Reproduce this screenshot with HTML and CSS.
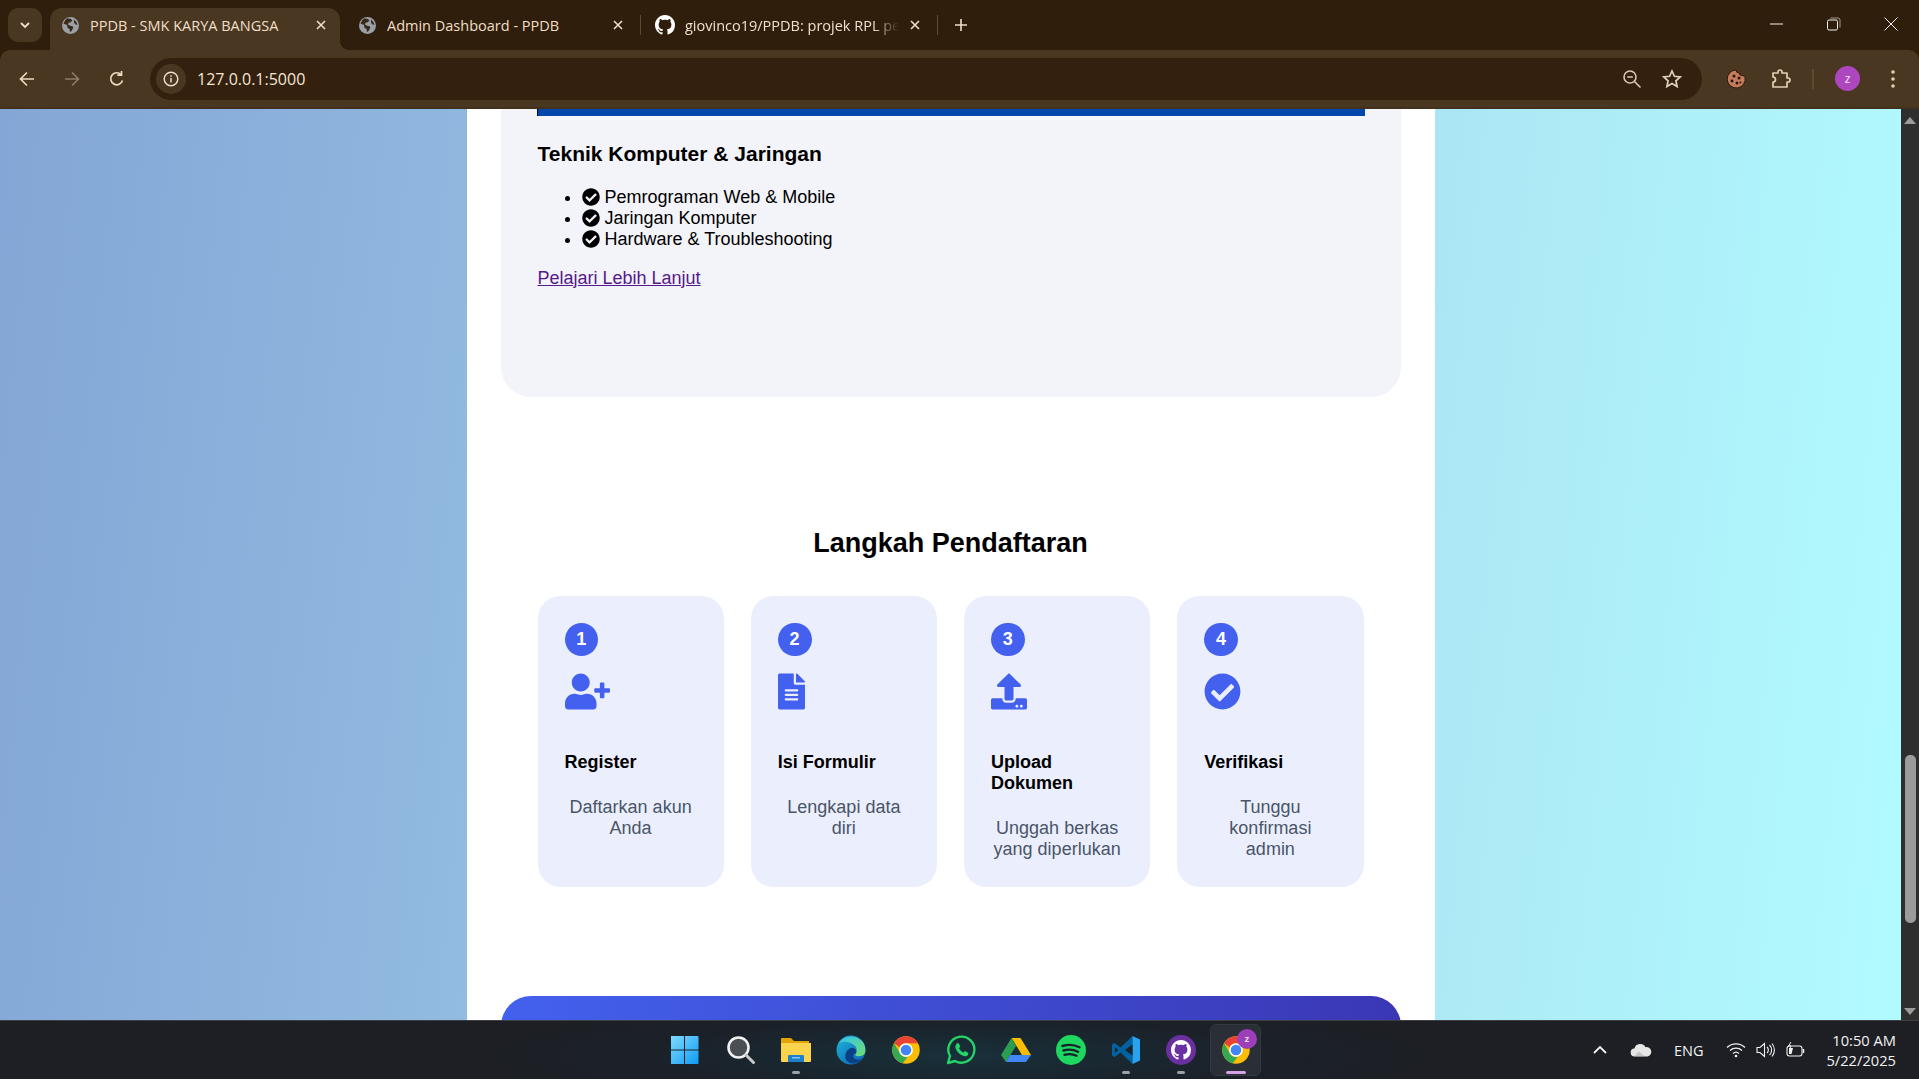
FILE: index.html
```html
<!DOCTYPE html>
<html lang="id">
<head>
<meta charset="utf-8">
<title>PPDB - SMK KARYA BANGSA</title>
<link rel="stylesheet" href="styles.css">
</head>
<body>
<svg class="defs" width="0" height="0" aria-hidden="true">
  <symbol id="i-check" viewBox="0 0 512 512"><path d="M504 256c0 136.967-111.033 248-248 248S8 392.967 8 256 119.033 8 256 8s248 111.033 248 248zM227.314 387.314l184-184c6.248-6.248 6.248-16.379 0-22.627l-22.627-22.627c-6.248-6.249-16.379-6.249-22.628 0L216 308.118l-69.059-69.059c-6.248-6.248-16.379-6.248-22.628 0l-22.627 22.627c-6.248 6.248-6.248 16.379 0 22.627l104 104c6.249 6.249 16.379 6.249 22.628.001z"/></symbol>
  <symbol id="i-github" viewBox="0 0 16 16"><path d="M8 0C3.58 0 0 3.58 0 8c0 3.54 2.29 6.53 5.47 7.59.4.07.55-.17.55-.38 0-.19-.01-.82-.01-1.49-2.01.37-2.53-.49-2.69-.94-.09-.23-.48-.94-.82-1.13-.28-.15-.68-.52-.01-.53.63-.01 1.08.58 1.23.82.72 1.21 1.87.87 2.33.66.07-.52.28-.87.51-1.07-1.78-.2-3.64-.89-3.64-3.95 0-.87.31-1.59.82-2.15-.08-.2-.36-1.02.08-2.12 0 0 .67-.21 2.2.82.64-.18 1.32-.27 2-.27.68 0 1.36.09 2 .27 1.53-1.04 2.2-.82 2.2-.82.44 1.1.16 1.92.08 2.12.51.56.82 1.27.82 2.15 0 3.07-1.87 3.75-3.65 3.95.29.25.54.73.54 1.48 0 1.07-.01 1.93-.01 2.2 0 .21.15.46.55.38A8.013 8.013 0 0016 8c0-4.42-3.58-8-8-8z"/></symbol>
  <symbol id="i-globe" viewBox="0 0 16 16"><circle cx="8" cy="8" r="8" fill="#9aa0a6"/><path fill="#3a2a18" d="M5 1.2l3.5.6 1.2 1.5-1.5 1.6-2 .4-.6 1.7 2 1.3 2.4.3.6 1.5-1.6 3-1.5.9-.4-2.6-2-1.4-.3-2.4L1.4 6.2 3 3zM11 2.4l2.4 2 1.2 3-1.8-.4-1.3-1.4z"/></symbol>
  <symbol id="i-close" viewBox="0 0 12 12"><path d="M2 2l8 8M10 2l-8 8" fill="none" stroke="currentColor" stroke-width="1.6"/></symbol>
  <symbol id="i-chrome" viewBox="0 0 48 48">
    <circle cx="24" cy="24" r="22" fill="#fbbc04"/>
    <path fill="#ea4335" d="M24 2a22 22 0 0 1 19 11H24a11 11 0 0 0-10 6.5L5 13A22 22 0 0 1 24 2z"/>
    <path fill="#34a853" d="M5 13l9.5 16.500A11 11 0 0 0 27 34.600L18.500 45.300A22 22 0 0 1 5 13z"/>
    <circle cx="24" cy="24" r="11" fill="#fff"/><circle cx="24" cy="24" r="8.500" fill="#4285f4"/>
  </symbol>
</svg>

<div class="tabstrip">
  <div class="tab-menu"><svg width="12" height="12" viewBox="0 0 12 12"><path d="M2 4l4 4 4-4" fill="none" stroke="#f0dfc8" stroke-width="1.800"/></svg></div>
  <div class="tab tab-active">
    <svg class="tab-icon"><use href="#i-globe"/></svg>
    <span class="tab-title">PPDB - SMK KARYA BANGSA</span>
    <svg class="tab-close"><use href="#i-close"/></svg>
  </div>
  <div class="tab-sep tab-sep-off"></div>
  <div class="tab">
    <svg class="tab-icon"><use href="#i-globe"/></svg>
    <span class="tab-title">Admin Dashboard - PPDB</span>
    <svg class="tab-close"><use href="#i-close"/></svg>
  </div>
  <div class="tab-sep"></div>
  <div class="tab">
    <svg class="tab-icon tab-icon-gh"><use href="#i-github"/></svg>
    <span class="tab-title tab-title-fade">giovinco19/PPDB: projek RPL pe</span>
    <svg class="tab-close"><use href="#i-close"/></svg>
  </div>
  <div class="tab-sep"></div>
  <svg class="tab-new" width="14" height="14" viewBox="0 0 14 14"><path d="M7 1v12M1 7h12" stroke="#f0dfc8" stroke-width="1.600"/></svg>
  <div class="win-controls">
    <svg width="14" height="14" viewBox="0 0 14 14"><path d="M0 7h13" stroke="#f2f2f2" stroke-width="1"/></svg>
    <svg width="14" height="14" viewBox="0 0 14 14"><rect x=".5" y="3" width="10" height="10" rx="1.500" fill="none" stroke="#f2f2f2"/><path d="M3.500 1h7.500a2 2 0 0 1 2 2v7.500" fill="none" stroke="#a89c8e"/></svg>
    <svg width="14" height="14" viewBox="0 0 14 14"><path d="M.5.500l13 13M13.500.500l-13 13" stroke="#f2f2f2" stroke-width="1"/></svg>
  </div>
</div>

<div class="toolbar">
  <div class="nav-btns">
    <svg width="18" height="18" viewBox="0 0 18 18"><path d="M16 9H3M9 2.500L2.500 9 9 15.500" fill="none" stroke="#ecd9bf" stroke-width="1.700"/></svg>
    <svg width="18" height="18" viewBox="0 0 18 18"><path d="M2 9h13M9 2.500L15.500 9 9 15.500" fill="none" stroke="#8d7b66" stroke-width="1.700"/></svg>
    <svg width="18" height="18" viewBox="0 0 18 18"><path d="M14.500 10.500a6 6 0 1 1-1.500-6M13.500 1v4.200H9.300" fill="none" stroke="#ecd9bf" stroke-width="1.700"/></svg>
  </div>
  <div class="omnibox">
    <span class="info-chip"><svg width="16" height="16" viewBox="0 0 16 16"><circle cx="8" cy="8" r="6.800" fill="none" stroke="#f0dfc8" stroke-width="1.400"/><path d="M8 7v4.500M8 4.200v1.500" stroke="#f0dfc8" stroke-width="1.500"/></svg></span>
    <span class="url">127.0.0.1:5000</span>
    <svg class="omni-zoom" width="20" height="20" viewBox="0 0 20 20"><circle cx="8" cy="8" r="6" fill="none" stroke="#d8c8b2" stroke-width="1.600"/><path d="M5.200 8h5.600M12.500 12.500l6 6" stroke="#d8c8b2" stroke-width="1.600"/></svg>
    <svg class="omni-star" width="20" height="20" viewBox="0 0 20 20"><path d="M10 2l2.400 5.300 5.800.6-4.300 3.900 1.200 5.700L10 14.600l-5.100 2.900 1.200-5.700L1.800 7.900l5.800-.6z" fill="none" stroke="#e0d2bd" stroke-width="1.700"/></svg>
  </div>
  <div class="tool-icons">
    <svg class="ti-cookie" width="20" height="20" viewBox="0 0 20 20"><path d="M10 1a3 3 0 0 0 3 3 3 3 0 0 0 3 2.500c1 .3 2.800.5 3 1.500A9 9 0 1 1 10 1z" fill="#c67c57" stroke="#2a1a10" stroke-width="1"/><circle cx="8" cy="7" r="1.500" fill="#23150d"/><circle cx="13" cy="9" r="1.500" fill="#23150d"/><circle cx="6" cy="12" r="1.400" fill="#23150d"/><circle cx="11" cy="14" r="1.500" fill="#23150d"/><circle cx="14.500" cy="13.500" r="1" fill="#23150d"/></svg>
    <svg class="ti-puzzle" width="22" height="22" viewBox="0 0 22 22"><path d="M3 5h5V4a2 2 0 0 1 4 0v1h5v5h1a2 2 0 0 1 0 4h-1v5H3v-5a2.500 2.500 0 0 0 0-5z" fill="none" stroke="#e3cfb2" stroke-width="1.700" stroke-linejoin="round"/></svg>
    <span class="ti-sep"></span>
    <span class="avatar">z</span>
    <svg class="ti-dots" width="6" height="20" viewBox="0 0 6 20"><circle cx="3" cy="3" r="1.800" fill="#e6cfae"/><circle cx="3" cy="10" r="1.800" fill="#e6cfae"/><circle cx="3" cy="17" r="1.800" fill="#e6cfae"/></svg>
  </div>
</div>

<div class="viewport">
  <div class="page">
    <main class="sheet">
      <section class="major-card">
        <div class="major-image"></div>
        <h3 class="major-title">Teknik Komputer &amp; Jaringan</h3>
        <ul class="major-list">
          <li><svg class="li-check"><use href="#i-check"/></svg> Pemrograman Web &amp; Mobile</li>
          <li><svg class="li-check"><use href="#i-check"/></svg> Jaringan Komputer</li>
          <li><svg class="li-check"><use href="#i-check"/></svg> Hardware &amp; Troubleshooting</li>
        </ul>
        <a class="major-link" href="#">Pelajari Lebih Lanjut</a>
      </section>

      <section class="steps">
        <h2 class="steps-title">Langkah Pendaftaran</h2>
        <div class="steps-grid">
          <article class="step">
            <div class="step-num">1</div>
            <svg class="step-icon step-icon-user" viewBox="0 0 640 512"><path d="M624 208h-64v-64c0-8.800-7.200-16-16-16h-32c-8.800 0-16 7.200-16 16v64h-64c-8.800 0-16 7.200-16 16v32c0 8.800 7.200 16 16 16h64v64c0 8.800 7.200 16 16 16h32c8.800 0 16-7.200 16-16v-64h64c8.800 0 16-7.200 16-16v-32c0-8.800-7.200-16-16-16zm-400 48c70.700 0 128-57.300 128-128S294.700 0 224 0 96 57.300 96 128s57.300 128 128 128zm89.600 32h-16.700c-22.200 10.200-46.900 16-72.900 16s-50.600-5.800-72.900-16h-16.700C60.200 288 0 348.200 0 422.400V464c0 26.500 21.500 48 48 48h352c26.500 0 48-21.500 48-48v-41.600c0-74.200-60.200-134.400-134.400-134.400z"/></svg>
            <h4 class="step-title">Register</h4>
            <p class="step-desc">Daftarkan akun Anda</p>
          </article>
          <article class="step">
            <div class="step-num">2</div>
            <svg class="step-icon step-icon-file" viewBox="0 0 384 512"><path d="M224 136V0H24C10.700 0 0 10.700 0 24v464c0 13.300 10.700 24 24 24h336c13.300 0 24-10.700 24-24V160H248c-13.200 0-24-10.800-24-24zm64 236c0 6.600-5.400 12-12 12H108c-6.600 0-12-5.400-12-12v-8c0-6.600 5.400-12 12-12h168c6.600 0 12 5.400 12 12v8zm0-64c0 6.600-5.400 12-12 12H108c-6.600 0-12-5.400-12-12v-8c0-6.600 5.400-12 12-12h168c6.600 0 12 5.400 12 12v8zm0-72v8c0 6.600-5.400 12-12 12H108c-6.600 0-12-5.400-12-12v-8c0-6.600 5.400-12 12-12h168c6.600 0 12 5.400 12 12zm96-114.100v6.100H256V0h6.100c6.400 0 12.500 2.500 17 7l97.900 98c4.500 4.500 7 10.600 7 16.900z"/></svg>
            <h4 class="step-title">Isi Formulir</h4>
            <p class="step-desc">Lengkapi data diri</p>
          </article>
          <article class="step">
            <div class="step-num">3</div>
            <svg class="step-icon step-icon-upload" viewBox="0 0 512 512"><path d="M296 384h-80c-13.300 0-24-10.700-24-24V192h-87.700c-17.800 0-26.700-21.500-14.100-34.100L242.300 5.700c7.500-7.500 19.800-7.500 27.300 0l152.200 152.200c12.600 12.600 3.700 34.100-14.100 34.100H320v168c0 13.300-10.700 24-24 24zm216-8v112c0 13.300-10.700 24-24 24H24c-13.300 0-24-10.700-24-24V376c0-13.300 10.700-24 24-24h136v8c0 30.900 25.100 56 56 56h80c30.900 0 56-25.100 56-56v-8h136c13.300 0 24 10.700 24 24zm-124 88c0-11-9-20-20-20s-20 9-20 20 9 20 20 20 20-9 20-20zm64 0c0-11-9-20-20-20s-20 9-20 20 9 20 20 20 20-9 20-20z"/></svg>
            <h4 class="step-title">Upload Dokumen</h4>
            <p class="step-desc">Unggah berkas yang diperlukan</p>
          </article>
          <article class="step">
            <div class="step-num">4</div>
            <svg class="step-icon step-icon-check"><use href="#i-check"/></svg>
            <h4 class="step-title">Verifikasi</h4>
            <p class="step-desc">Tunggu konfirmasi admin</p>
          </article>
        </div>
      </section>

      <section class="cta"></section>
    </main>
  </div>
  <div class="scrollbar">
    <span class="sb-up"></span>
    <span class="sb-track"><span class="sb-thumb"></span></span>
    <span class="sb-down"></span>
  </div>
</div>

<footer class="taskbar">
  <div class="tb-apps">
    <span class="tb-app"><svg width="30" height="30" viewBox="1.500 0 30 30"><defs><linearGradient id="gw" x1="0" y1="0" x2="1" y2="1"><stop offset="0" stop-color="#7fdcff"/><stop offset="1" stop-color="#0f9bf5"/></linearGradient></defs><path fill="url(#gw)" d="M1 2a1 1 0 0 1 1-1h12.500v13.500H1zM15.500 1H28a1 1 0 0 1 1 1v12.500H15.500zM1 15.500h13.500V29H2a1 1 0 0 1-1-1zM15.500 15.500H29V28a1 1 0 0 1-1 1H15.500z"/></svg></span>
    <span class="tb-app"><svg width="30" height="30" viewBox="0 0 30 30"><circle cx="12.500" cy="12.500" r="10" fill="#4a4f55" stroke="#f2f2f2" stroke-width="2.600"/><path d="M20 20l7.500 7.500" stroke="#c9c9c9" stroke-width="3" stroke-linecap="round"/></svg></span>
    <span class="tb-app tb-open"><svg width="30" height="30" viewBox="0 0 30 30"><path fill="#e2a400" d="M0 4a1 1 0 0 1 1-1h9l3 3h15v4H0z"/><path fill="#fcd34d" d="M0 8h30v18a1 1 0 0 1-1 1H1a1 1 0 0 1-1-1z"/><path fill="#1b7fcb" d="M8 20h14a1 1 0 0 1 1 1v6H7v-6a1 1 0 0 1 1-1z"/><path fill="#7ec6f2" d="M11 22h8v1.500h-8z"/></svg></span>
    <span class="tb-app"><svg width="30" height="30" viewBox="0 0 30 30"><defs><linearGradient id="ge" x1="0" y1="0" x2="1" y2="1"><stop offset="0" stop-color="#1fb4d8"/><stop offset="1" stop-color="#0a5fb0"/></linearGradient><linearGradient id="ge2" x1="0" y1="0" x2="1" y2="1"><stop offset="0" stop-color="#35c1f1"/><stop offset="1" stop-color="#6fe06a"/></linearGradient></defs><circle cx="15" cy="15" r="14.500" fill="url(#ge)"/><path fill="url(#ge2)" d="M3 8C7 1 19-1 26 6c3 3 4 8 3 12-2 4-8 4-10 2 3-3 2-8-1-10C13 6 7 6 3 8z"/><path fill="#0b3f86" d="M13 14c4-3 8 0 7 4-3 1-4 4-1 6 2 1 5 1 7 0-4 5-11 6-15 2-3-3-2-9 2-12z"/></svg></span>
    <span class="tb-app"><svg width="30" height="30"><use href="#i-chrome"/></svg></span>
    <span class="tb-app"><svg width="30" height="30" viewBox="0 0 30 30"><path d="M2 28l2-7A13 13 0 1 1 9 26z" fill="none" stroke="#25d366" stroke-width="2.400" stroke-linejoin="round"/><path d="M10.500 8.500l2 -.5 1.800 3.500-1.300 1.700c1 2 2.300 3.200 4.300 4.200l1.700-1.300 3.300 1.800-.4 2c-1 1.500-3 1.600-5 .8-3.500-1.300-6.200-4.200-7.300-7.500-.5-2-.2-3.700 1.900-5.200z" fill="#25d366"/></svg></span>
    <span class="tb-app"><svg width="30" height="30" viewBox="0 0 30 30"><path fill="#fbbc04" d="M10.500 3h9L30 20h-9z"/><path fill="#2a9d50" d="M10.500 3L15 11 5 27 0 20z"/><path fill="#4285f4" d="M9 20h21l-5 7H5z"/></svg></span>
    <span class="tb-app"><svg width="30" height="30" viewBox="0 0 30 30"><circle cx="15" cy="15" r="15" fill="#1ed760"/><path d="M6.500 11c5.500-1.700 12-1.300 17 1.300M7.500 15.500c5-1.400 10-1 14.500 1.300M8.500 19.800c4-1 8.500-.8 12 1" fill="none" stroke="#16222b" stroke-width="2.400" stroke-linecap="round"/></svg></span>
    <span class="tb-app tb-open"><svg width="30" height="30" viewBox="0 0 30 30"><path fill="#0065a9" d="M21.500 1L9.500 12.500 3.500 8 1 9.500v11L3.500 22l6-4.500L21.500 29z" opacity=".95"/><path fill="#2aa3ee" d="M21.500 1L29 4.500v21L21.500 29z"/><path fill="#1b2129" d="M21.500 9.500L14 15l7.500 5.500zM4 12v6l3.200-3z"/></svg></span>
    <span class="tb-app tb-open"><svg width="30" height="30" viewBox="0 0 30 30"><circle cx="15" cy="15" r="15" fill="#6b2fa0"/><svg x="5" y="5" width="20" height="20" fill="#fff"><use href="#i-github"/></svg></svg></span>
    <span class="tb-app tb-active"><svg width="30" height="30"><use href="#i-chrome"/></svg><span class="tb-badge">z</span></span>
  </div>
  <div class="tray">
    <svg class="tr-chev" width="16" height="10" viewBox="0 0 16 10"><path d="M2 8l6-6 6 6" fill="none" stroke="#f2f2f2" stroke-width="1.800"/></svg>
    <svg class="tr-cloud" width="22" height="14" viewBox="0 0 22 14"><path fill="#e6e6e6" d="M5 13.500a4 4 0 0 1-.6-8A6 6 0 0 1 15.500 4.200 4.700 4.700 0 0 1 17.500 13.500z"/><path fill="#9c9c9c" d="M4 13.500l5-5 6 5z" opacity=".45"/></svg>
    <span class="tr-lang">ENG</span>
    <svg class="tr-wifi" width="20" height="16" viewBox="0 0 20 16"><path d="M1 5.500a13 13 0 0 1 18 0M4 8.500a9 9 0 0 1 12 0M7 11.500a4.500 4.500 0 0 1 6 0" fill="none" stroke="#f2f2f2" stroke-width="1.300"/><circle cx="10" cy="14" r="1.300" fill="#f2f2f2"/></svg>
    <svg class="tr-vol" width="20" height="16" viewBox="0 0 20 16"><path d="M1 5.500h3L8.500 1.500v13L4 10.500H1z" fill="none" stroke="#f2f2f2" stroke-width="1.100"/><path d="M11 5a4 4 0 0 1 0 6M13.500 3a7 7 0 0 1 0 10M16 1.500a10 10 0 0 1 0 13" fill="none" stroke="#f2f2f2" stroke-width="1.100"/></svg>
    <svg class="tr-bat" width="20" height="16" viewBox="0 0 20 16"><rect x="1" y="4" width="15" height="10" rx="2.500" fill="none" stroke="#f2f2f2" stroke-width="1.100"/><path d="M17.500 7v4" stroke="#f2f2f2" stroke-width="1.500"/><path d="M3 6h4l-1.500 6H3z" fill="#f2f2f2"/><path d="M5 0L2.500 4H5L3.500 7.500" fill="none" stroke="#f2f2f2" stroke-width="1"/></svg>
    <div class="clock"><span>10:50 AM</span><span>5/22/2025</span></div>
  </div>
</footer>
</body>
</html>
```
FILE: styles.css
```css
* { box-sizing: border-box; }
html, body { margin: 0; height: 100%; overflow: hidden; }
body {
  width: 1919px;
  height: 1079px;
  display: flex;
  flex-direction: column;
  font-family: "Liberation Sans", Arial, sans-serif;
  background: #2f1d0a;
}
.defs { position: absolute; }

/* browser chrome */
.tabstrip {
  height: 50px;
  flex: none;
  display: flex;
  align-items: flex-end;
  background: #2f1e0b;
  padding-left: 8px;
  color: #f0dfc8;
  font-family: "Open Sans", "Noto Sans", sans-serif;
  font-size: 14.500px;
}
.tab-menu {
  width: 34px;
  height: 34px;
  margin: 0 8px 8px 0;
  border-radius: 10px;
  background: #4a3722;
  display: flex;
  align-items: center;
  justify-content: center;
}
.tab {
  width: 290px;
  height: 42px;
  display: flex;
  align-items: center;
  padding: 0 13px 8px 12px;
  border-radius: 12px 12px 0 0;
  position: relative;
}
.tab-active { background: #4a3722; }
.tab-active::after {
  content: "";
  position: absolute;
  right: -10px;
  bottom: 0;
  width: 10px;
  height: 10px;
  background: radial-gradient(circle at 100% 0, transparent 10px, #4a3722 10.500px);
}
.tab-icon { width: 17px; height: 17px; flex: none; }
.tab-icon-gh { width: 20px; height: 20px; margin-left: -1px; margin-right: -1px; fill: #fff; }
.tab-title {
  flex: 1;
  margin-left: 11px;
  white-space: nowrap;
  overflow: hidden;
}
.tab-title-fade {
  -webkit-mask-image: linear-gradient(90deg, #000 88%, transparent 100%);
  mask-image: linear-gradient(90deg, #000 88%, transparent 100%);
}
.tab-close { width: 12px; height: 12px; flex: none; margin-left: 10px; color: #f0dfc8; }
.tab-sep { width: 1px; height: 20px; margin: 0 3px 15px; background: #5c4a35; flex: none; }
.tab-sep-off { background: transparent; }
.tab-new { margin: 0 0 18px 13px; flex: none; }
.win-controls {
  margin-left: auto;
  display: flex;
  align-items: center;
  gap: 43px;
  padding-right: 21px;
  height: 100%;
  padding-bottom: 3px;
}

.toolbar {
  height: 59px;
  flex: none;
  display: flex;
  align-items: center;
  background: #4a3722;
  border-radius: 10px 10px 0 0;
  border-bottom: 2px solid #43311e;
  padding-left: 18px;
}
.nav-btns { display: flex; gap: 27px; width: 132px; flex: none; }
.omnibox {
  width: 1552px;
  height: 42px;
  flex: none;
  display: flex;
  align-items: center;
  background: #33200e;
  border-radius: 21px;
  padding: 0 5px 0 6px;
  color: #f3e6d2;
  font-family: "Open Sans", "Noto Sans", sans-serif;
}
.info-chip {
  width: 30px;
  height: 30px;
  border-radius: 50%;
  background: #4a3722;
  display: flex;
  align-items: center;
  justify-content: center;
  flex: none;
}
.url { margin-left: 11px; font-size: 16px; }
.omni-zoom { margin-left: auto; margin-right: 20px; }
.omni-star { margin-right: 15px; }
.tool-icons { display: flex; align-items: center; flex: 1; padding-left: 24px; }
.ti-puzzle { margin-left: 24px; }
.ti-sep { width: 2px; height: 20px; background: #5e4a33; margin-left: 20px; }
.avatar {
  width: 25px;
  height: 25px;
  margin-left: 21px;
  border-radius: 50%;
  background: #ae46c0;
  color: #f5e6f8;
  font: 12px/25px "Open Sans", sans-serif;
  text-align: center;
}
.ti-dots { margin-left: 30px; }

/* page */
.viewport {
  height: 911px;
  flex: none;
  display: flex;
  overflow: hidden;
}
.page {
  width: 1901px;
  flex: none;
  display: flex;
  justify-content: center;
  background: linear-gradient(96deg, #83a6d6 0%, #90b8df 24%, #ace8f5 75%, #b1fbff 100%);
}
.sheet {
  width: 968px;
  height: 100%;
  background: #fff;
  padding: 0 34px;
  overflow: hidden;
}
.major-card {
  height: 288px;
  padding: 0 36px;
  background: #f3f4fa;
  border-radius: 0 0 30px 30px;
}
.major-image {
  height: 7px;
  background: #0047ab;
  border-left: 1px solid #000;
}
.major-title {
  margin: 26px 0 0 1px;
  font-size: 21px;
  line-height: 24px;
  color: #000;
}
.major-list {
  margin: 21px 0 0 1px;
  padding: 0 0 0 44px;
  font-size: 18px;
  line-height: 21px;
  color: #000;
}
.li-check { width: 18px; height: 18px; vertical-align: -3px; fill: #000; }
.major-link {
  display: block;
  margin: 18px 0 0 1px;
  width: max-content;
  font-size: 18px;
  line-height: 21px;
  color: #551a8b;
}

.steps { padding: 129px 37px 0; }
.steps-title {
  margin: 0;
  text-align: center;
  font-size: 27px;
  line-height: 34px;
  color: #000;
}
.steps-grid {
  margin-top: 35.500px;
  display: grid;
  grid-template-columns: repeat(4, 1fr);
  gap: 27px;
}
.step {
  background: #ebeffd;
  border-radius: 22.500px;
  padding: 27px;
  min-height: 291.500px;
}
.step-num {
  width: 33.750px;
  height: 33.750px;
  border-radius: 50%;
  background: #4361ee;
  color: #fff;
  font-weight: 700;
  font-size: 18px;
  line-height: 33px;
  text-align: center;
}
.step-icon { display: block; height: 37px; margin-top: 16.500px; fill: #4361ee; }
.step-icon-user { width: 45px; }
.step-icon-file { width: 27px; }
.step-icon-upload { width: 36px; }
.step-icon-check { width: 37px; }
.step-title {
  margin: 42px 0 0;
  font-size: 18px;
  line-height: 21px;
  color: #000;
}
.step-desc {
  margin: 24px 0 0;
  font-size: 18px;
  line-height: 21px;
  text-align: center;
  color: #4a5568;
}
.cta {
  height: 60px;
  margin-top: 109px;
  border-radius: 30px 30px 0 0;
  background: linear-gradient(95deg, #4361ee, #3a37b5);
}

/* scrollbar */
.scrollbar {
  width: 18px;
  flex: none;
  background: #2e2e2e;
  display: flex;
  flex-direction: column;
  align-items: center;
}
.sb-up, .sb-down {
  width: 0;
  height: 0;
  flex: none;
  border-left: 6.500px solid transparent;
  border-right: 6.500px solid transparent;
}
.sb-up { margin-top: 8px; border-bottom: 7px solid #9b9b9b; }
.sb-down { margin-bottom: 5px; border-top: 7px solid #9b9b9b; }
.sb-track { flex: 1; width: 100%; display: flex; justify-content: center; padding-top: 631px; }
.sb-thumb { width: 11px; height: 168px; background: #9b9b9b; border-radius: 5px; }

/* taskbar */
.taskbar {
  flex: 1;
  position: relative;
  display: flex;
  align-items: center;
  justify-content: center;
  border-top: 1px solid #3e4044;
  background: radial-gradient(ellipse 500px 60px at 960px 60%, #18303a 0%, #1b2129 60%, #1d1f24 100%);
}
.tb-apps { display: flex; gap: 15px; margin-left: 2px; }
.tb-app {
  position: relative;
  width: 40px;
  height: 50px;
  display: flex;
  align-items: center;
  justify-content: center;
}
.tb-open::after {
  content: "";
  position: absolute;
  bottom: 1px;
  left: 50%;
  margin-left: -4px;
  width: 8px;
  height: 3px;
  border-radius: 2px;
  background: #9ca0a6;
}
.tb-active {
  width: 49px;
  margin: 0 -4.500px;
  background: #2a2f37;
  border-radius: 5px;
  outline: 1px solid #34383f;
}
.tb-active::after {
  content: "";
  position: absolute;
  bottom: 1px;
  left: 50%;
  margin-left: -10px;
  width: 20px;
  height: 3px;
  border-radius: 2px;
  background: #d8a0e6;
}
.tb-badge {
  position: absolute;
  top: 4px;
  right: 3px;
  width: 20px;
  height: 20px;
  border-radius: 50%;
  background: #9c3fb8;
  color: #f0d8f5;
  font: 700 9px/20px "Open Sans", sans-serif;
  text-align: center;
}
.tray {
  position: absolute;
  right: 23px;
  top: 0;
  bottom: 0;
  display: flex;
  align-items: center;
  color: #f2f2f2;
  font-family: "Open Sans", "Noto Sans", sans-serif;
  font-size: 14.700px;
}
.tr-cloud { margin-left: 22px; }
.tr-lang { margin-left: 22px; font-size: 14.500px; }
.tr-wifi { margin-left: 23px; }
.tr-vol { margin-left: 10px; }
.tr-bat { margin-left: 10px; }
.clock {
  margin-left: 20px;
  display: flex;
  flex-direction: column;
  align-items: flex-end;
  line-height: 20px;
}
```
